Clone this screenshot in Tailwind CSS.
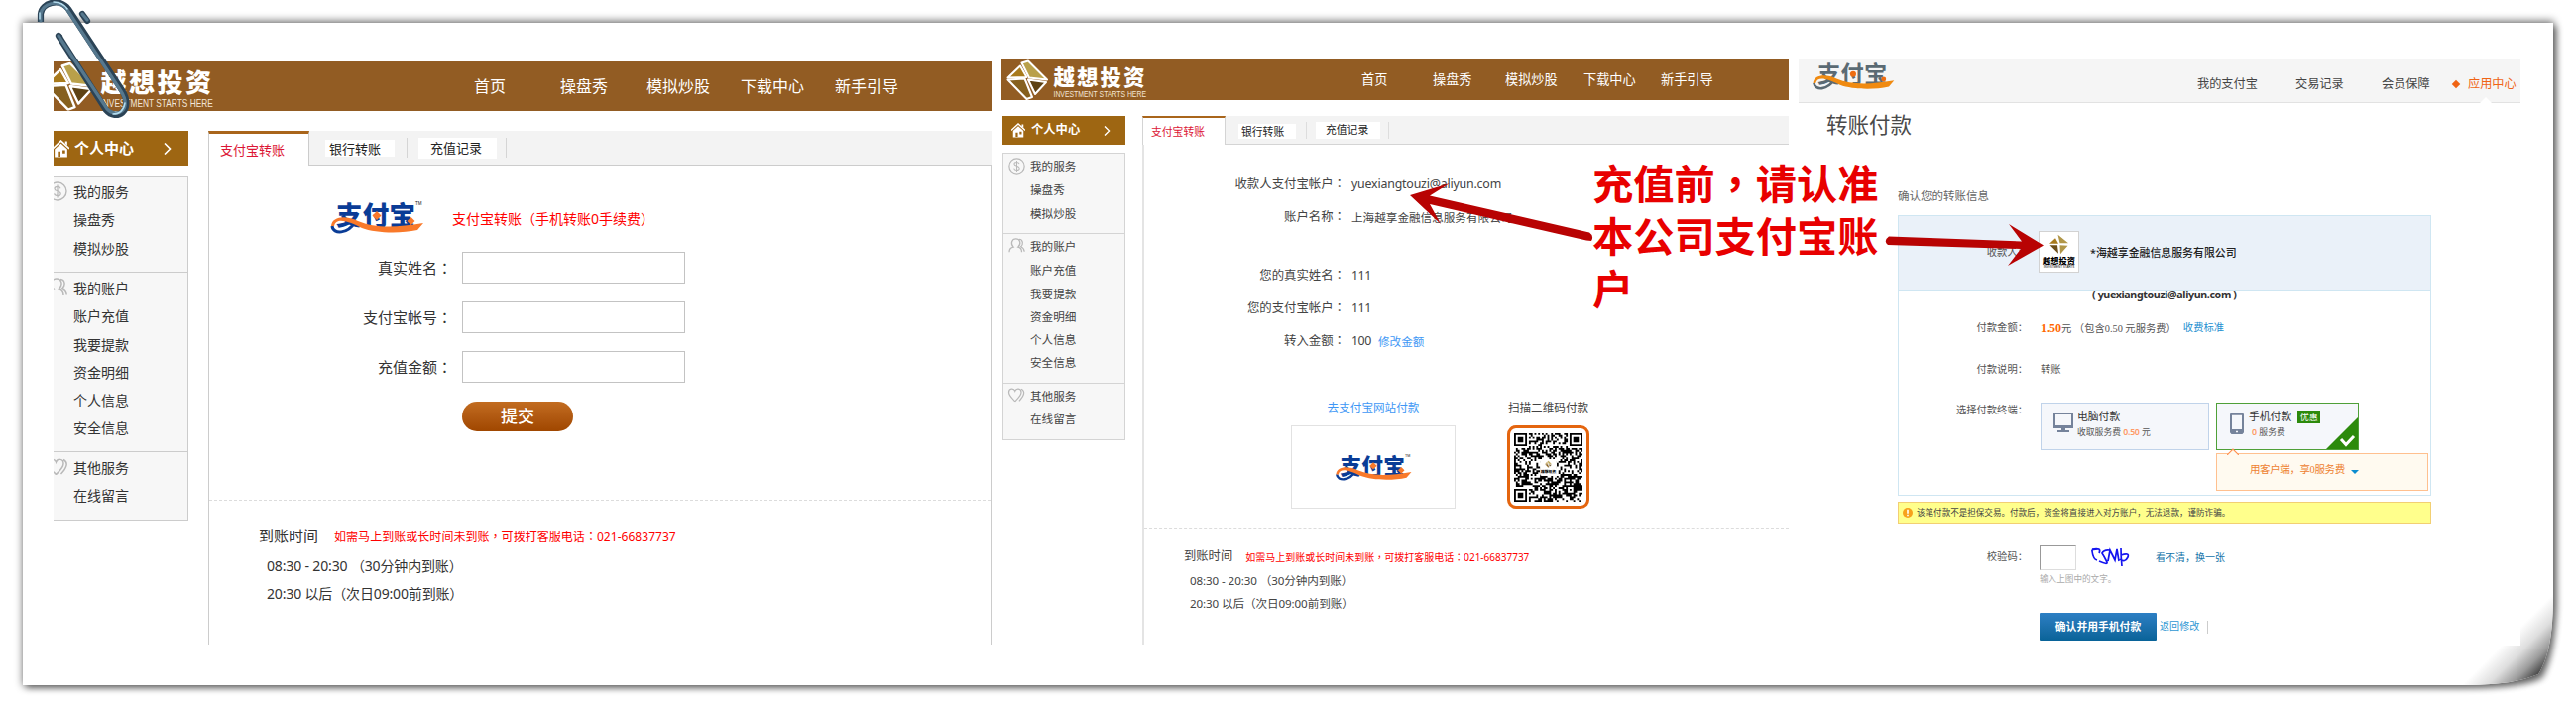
<!DOCTYPE html>
<html lang="zh-CN">
<head>
<meta charset="utf-8">
<title>支付宝转账</title>
<script src="https://cdn.jsdelivr.net/npm/@tailwindcss/browser@4"></script>
</head>
<body class="bg-white">
<div class="relative w-[2598px] h-[714px] overflow-hidden bg-white font-['Noto_Sans','Noto_Sans_CJK_SC',sans-serif] text-[#333] whitespace-nowrap">

<!-- shared symbols -->
<svg class="absolute w-0 h-0">
  <defs>
    <symbol id="mark" viewBox="0 0 42 41">
      <g stroke="#fff" stroke-width="2" stroke-linejoin="round">
        <path d="M1.5 18.5 14 6.500 20.500 18z" fill="#a87a1c"/>
        <path d="M1.500 20.500 18.500 19.500 26 38 20.500 40z" fill="#86601f"/>
        <path d="M15.500 3.500 22 1.500 41 20.500 23 18.500z" fill="#b9a04a"/>
        <path d="M22 20.500 40 23 29 35z" fill="#5e4214"/>
      </g>
    </symbol>
    <symbol id="brand" viewBox="0 0 142 41">
      <use href="#mark" width="42" height="41"/>
      <text x="47.500" y="25.500" font-size="21.500" font-weight="900" fill="#fff" textLength="92" lengthAdjust="spacing" font-family="Noto Sans CJK SC">越想投资</text>
      <text x="47.500" y="38.200" font-size="8.300" fill="#f3e6d8" textLength="93.500" lengthAdjust="spacingAndGlyphs" font-family="Liberation Sans">INVESTMENT STARTS HERE</text>
    </symbol>
    <symbol id="alipay" viewBox="0 0 94 33">
      <text x="6" y="24" font-size="26.500" font-weight="900" textLength="80" fill="currentColor" font-family="Noto Sans CJK SC">支付宝</text>
      <text x="86" y="4" font-size="5" fill="#111" textLength="6.500" lengthAdjust="spacingAndGlyphs" font-family="Liberation Sans">TM</text>
      <path d="M25 21C18 33 3 34 2 25" fill="none" stroke="currentColor" stroke-width="3"/>
      <path d="M1 25C2 15 16 14 28 20C45 27 65 27 94 22L88 29C70 33 45 32 32 27C18 20 6 16 4 25z" fill="#f9792a"/>
      <path d="M47 10 51.500 14.500 47 19 42.500 14.500zM81.500 16 85.500 20 81.500 24 77.500 20z" fill="#f9792a"/>
    </symbol>
    <symbol id="home" viewBox="0 0 16 17">
      <path d="M0 8.500 8 1 16 8.500" fill="none" stroke="#fff" stroke-width="1.600"/>
      <path d="M2 9 8 3.500 14 9V16.500H2zM5 11v5h2.500v-5zM9.500 10v3h2.500v-3z" fill="#fff" fill-rule="evenodd"/>
      <path d="M12 1.500h2v4l-2-2z" fill="#fff"/>
    </symbol>
    <symbol id="coin" viewBox="0 0 20 20">
      <circle cx="10" cy="10" r="9" fill="none" stroke="#b9b9b9" stroke-width="1.400"/>
      <path d="M13 7.200C12 4.600 7 4.800 7 7.400C7 10.200 13.200 9.400 13.200 12.500C13.200 15.400 7.500 15.400 6.600 12.400M10 3.600V16.400" fill="none" stroke="#b9b9b9" stroke-width="1.200"/>
    </symbol>
    <symbol id="people" viewBox="0 0 20 18">
      <path d="M1 17C1 13 3 11.500 6 11C2 7 4 1 9 1C14 1 16 7 11.500 11C14 11.500 16 13 16 17M13 1.500C18 2 18 8 15 10.500C18 12 19 13.500 19.200 16.500" fill="none" stroke="#b9b9b9" stroke-width="1.500"/>
    </symbol>
    <symbol id="heart" viewBox="0 0 20 18">
      <path d="M8.500 16.500C4 12 1 9.500 1 5.500C1 .5 7 0 8.500 4C10 0 16 .5 16 5.500C16 9.500 13 12 8.500 16.500M16 1.500C21 4 20 9 13.500 16" fill="none" stroke="#b9b9b9" stroke-width="1.500"/>
    </symbol>
  </defs>
</svg>

<!-- paper sheet with curled corner -->
<svg class="absolute left-0 top-0" width="2598" height="714">
  <defs>
    <linearGradient id="curl" gradientUnits="userSpaceOnUse" x1="2522" y1="652" x2="2554" y2="684">
      <stop offset="0" stop-color="#fff"/><stop offset=".4" stop-color="#dedede"/><stop offset=".75" stop-color="#9c9c9c"/><stop offset="1" stop-color="#505050"/>
    </linearGradient>
    <filter id="soft" x="-2%" y="-5%" width="104%" height="110%"><feGaussianBlur stdDeviation="4.500"/></filter>
    <filter id="tight" x="-2%" y="-5%" width="104%" height="110%"><feGaussianBlur stdDeviation="3"/></filter>
  </defs>
  <path d="M23 21H2576V610Q2574 660 2562 682Q2540 692 2480 692H23z" fill="#000" opacity=".55" filter="url(#soft)"/>
  <path d="M27 27H2579V612Q2577 662 2564 684Q2545 694 2490 694H27z" fill="#000" opacity=".35" filter="url(#tight)"/>
  <path d="M23 23H2575V600C2575 640 2570 664 2560 680C2540 688 2520 691 2480 691H23z" fill="#fff"/>
  <path d="M2575 540V600C2575 640 2570 664 2560 680C2540 688 2520 691 2480 691H2440V540z" fill="url(#curl)"/>
  <path d="M2400 500H2542V651H2400z" fill="#fff"/>
</svg>

<main class="relative flex items-start gap-[10px] pl-[54px] pt-[60px]">

  <!-- first capture: deposit form -->
  <section class="w-[946px] h-[588px] mt-[2px] shrink-0">
    <header class="h-[50px] bg-[#925c23] flex items-center overflow-hidden">
      <svg class="w-[172px] h-[50px] -ml-[10px] shrink-0"><use href="#brand"/></svg>
      <nav class="flex ml-[262px] text-white pb-px">
        <span class="w-[87px] text-[16px]">首页</span><span class="w-[87px] text-[16px]">操盘秀</span><span class="w-[95px] text-[16px]">模拟炒股</span><span class="w-[95px] text-[16px]">下载中心</span><span class="text-[16px]">新手引导</span>
      </nav>
    </header>
    <div class="flex mt-[20px] items-start">
      <aside class="w-[136px] mr-[20px]">
        <div class="h-[35px] bg-[#9e6612] flex items-center text-white font-bold text-[15px] overflow-hidden">
          <svg class="w-[17px] h-[18px] -ml-px mr-[5px] shrink-0"><use href="#home"/></svg>个人中心
          <svg class="w-[8px] h-[12px] ml-[30px]" viewBox="0 0 8 12"><path d="M1 .5 6.500 6 1 11.500" fill="none" stroke="#fff" stroke-width="1.600"/></svg>
        </div>
        <div class="mt-[10px] bg-[#f7f7f7] border-r border-b border-[#ccc] text-[14px] overflow-hidden">
          <div class="border-t border-[#ccc] pt-px pb-[10px]">
            <div class="h-[28px] flex items-center"><svg class="w-[20px] h-[20px] -ml-[6px] mr-[6px]"><use href="#coin"/></svg>我的服务</div>
            <div class="h-[29px] flex items-center pl-[20px]">操盘秀</div>
            <div class="h-[28px] flex items-center pl-[20px]">模拟炒股</div>
          </div>
          <div class="border-t border-[#ccc] pt-px pb-[10px]">
            <div class="h-[28px] flex items-center"><svg class="w-[20px] h-[18px] -ml-[6px] mr-[6px] -mt-[3px]"><use href="#people"/></svg>我的账户</div>
            <div class="h-[29px] flex items-center pl-[20px]">账户充值</div>
            <div class="h-[28px] flex items-center pl-[20px]">我要提款</div>
            <div class="h-[28px] flex items-center pl-[20px]">资金明细</div>
            <div class="h-[28px] flex items-center pl-[20px]">个人信息</div>
            <div class="h-[28px] flex items-center pl-[20px]">安全信息</div>
          </div>
          <div class="border-t border-[#ccc] pt-px pb-[10px]">
            <div class="h-[28px] flex items-center"><svg class="w-[20px] h-[18px] -ml-[6px] mr-[6px] -mt-px"><use href="#heart"/></svg>其他服务</div>
            <div class="h-[29px] flex items-center pl-[20px]">在线留言</div>
          </div>
        </div>
      </aside>
      <div class="w-[790px]">
        <div class="flex h-[35px] bg-[#f3f3f3] text-[13px]">
          <div class="w-[102px] bg-white border-t-[3px] border-t-[#a9651b] border-x border-x-[#ccc] pl-[11px] pt-px flex items-center text-[#dc1635]">支付宝转账</div>
          <div class="flex-1 border-b border-[#ccc] flex items-center text-[#222]">
            <span class="ml-[16px] w-[70px] h-[17px] mt-[1px] bg-white flex items-center pl-[4px]"><span class="mt-[3px]">银行转账</span></span>
            <span class="ml-[12px] w-px h-[20px] bg-[#d5d5d5]"></span>
            <span class="ml-[11px] w-[79px] h-[21px] bg-white flex items-center pl-[12px]"><span class="mt-[2px]">充值记录</span></span>
            <span class="ml-[9px] w-px h-[20px] bg-[#d5d5d5]"></span>
          </div>
        </div>
        <div class="h-[483px] border-l border-r border-[#ccc]">
          <div class="h-[338px] border-b border-dashed border-[#dcdcdc]">
            <div class="flex pt-[36px] pl-[122px] h-[87px]">
              <svg class="w-[94px] h-[33px] text-[#0a3c96]"><use href="#alipay"/></svg>
              <span class="ml-[29px] mt-[7px] text-[14px] text-[#f00]">支付宝转账（手机转账0手续费）</span>
            </div>
            <div class="flex flex-col gap-[18px] text-[15px]">
              <div class="flex items-center h-[32px]"><span class="w-[245px] text-right">真实姓名<span lang="zh-TW" class="font-['Noto_Sans_CJK_TC'] leading-none">：</span></span><span class="ml-[10px] w-[225px] h-[32px] border border-[#c3c3c3]"></span></div>
              <div class="flex items-center h-[32px]"><span class="w-[245px] text-right">支付宝帐号<span lang="zh-TW" class="font-['Noto_Sans_CJK_TC'] leading-none">：</span></span><span class="ml-[10px] w-[225px] h-[32px] border border-[#c3c3c3]"></span></div>
              <div class="flex items-center h-[32px]"><span class="w-[245px] text-right">充值金额<span lang="zh-TW" class="font-['Noto_Sans_CJK_TC'] leading-none">：</span></span><span class="ml-[10px] w-[225px] h-[32px] border border-[#c3c3c3]"></span></div>
            </div>
            <div class="mt-[19px] ml-[255px] w-[112px] h-[30px] rounded-full bg-linear-to-b from-[#c26c20] to-[#a04700] flex items-center justify-center text-white text-[17px] font-medium">提交</div>
          </div>
          <div class="pt-[20px] pl-[50px] text-[14px]">
            <div class="flex items-center h-[30px]"><span class="text-[15px]">到账时间</span><span class="ml-[16px] mt-[3px] text-[12px] text-[#f00] tracking-[0.040px]">如需马上到账或长时间未到账<span lang="zh-TW" class="font-['Noto_Sans_CJK_TC'] leading-none">，</span>可拨打客服电话<span lang="zh-TW" class="font-['Noto_Sans_CJK_TC'] leading-none">：</span>021-66837737</span></div>
            <div class="pl-[8px] h-[28px] flex items-center mt-px tracking-[-0.150px]">08:30 - 20:30 （30分钟内到账）</div>
            <div class="pl-[8px] h-[28px] flex items-center tracking-[-0.150px]">20:30 以后（次日09:00前到账）</div>
          </div>
        </div>
      </div>
    </div>
  </section>

  <!-- second capture: transfer details -->
  <section class="w-[794px] h-[590px] shrink-0">
    <header class="h-[41px] bg-[#925c23] flex items-center overflow-hidden">
      <svg class="w-[142px] h-[41px] ml-[5px] shrink-0"><use href="#brand"/></svg>
      <nav class="flex ml-[216px] text-[13.200px] text-white">
        <span class="w-[72px]">首页</span><span class="w-[73px]">操盘秀</span><span class="w-[79px]">模拟炒股</span><span class="w-[78px]">下载中心</span><span>新手引导</span>
      </nav>
    </header>
    <div class="flex mt-[16px] items-start pl-px">
      <aside class="w-[124px] mr-[17px]">
        <div class="h-[29px] bg-[#9e6612] flex items-center text-white font-bold text-[12.300px]">
          <svg class="w-[14px] h-[15px] ml-[9px] mr-[6px]"><use href="#home"/></svg>个人中心
          <svg class="w-[7px] h-[10px] ml-[24px]" viewBox="0 0 8 12"><path d="M1 .5 6.500 6 1 11.500" fill="none" stroke="#fff" stroke-width="1.600"/></svg>
        </div>
        <div class="mt-[8px] bg-[#f7f7f7] border-x border-b border-[#d4d4d4] text-[11.600px] text-[#444]">
          <div class="border-t border-[#d4d4d4] pt-px pb-[7.800px]">
            <div class="h-[23.400px] flex items-center"><svg class="w-[17px] h-[17px] ml-[5px] mr-[5px]"><use href="#coin"/></svg>我的服务</div>
            <div class="h-[24.600px] flex items-center pl-[27px]">操盘秀</div>
            <div class="h-[23.200px] flex items-center pl-[27px]">模拟炒股</div>
          </div>
          <div class="border-t border-[#d4d4d4] pt-px pb-[7.800px]">
            <div class="h-[23.400px] flex items-center"><svg class="w-[17px] h-[15px] ml-[5px] mr-[5px] -mt-[2px]"><use href="#people"/></svg>我的账户</div>
            <div class="h-[24.600px] flex items-center pl-[27px]">账户充值</div>
            <div class="h-[23.200px] flex items-center pl-[27px]">我要提款</div>
            <div class="h-[23.200px] flex items-center pl-[27px]">资金明细</div>
            <div class="h-[23.200px] flex items-center pl-[27px]">个人信息</div>
            <div class="h-[23.200px] flex items-center pl-[27px]">安全信息</div>
          </div>
          <div class="border-t border-[#d4d4d4] pt-px pb-[7.800px]">
            <div class="h-[23.400px] flex items-center"><svg class="w-[18px] h-[15px] ml-[4px] mr-[5px] -mt-[2px]"><use href="#heart"/></svg>其他服务</div>
            <div class="h-[24.600px] flex items-center pl-[27px]">在线留言</div>
          </div>
        </div>
      </aside>
      <div class="w-[652px]">
        <div class="flex h-[29px] bg-[#f3f3f3] text-[10.800px]">
          <div class="w-[84px] bg-white border-t-2 border-t-[#a9651b] border-x border-x-[#d4d4d4] pl-[8px] pt-[2px] flex items-center text-[#dc1635]">支付宝转账</div>
          <div class="flex-1 border-b border-[#d4d4d4] flex items-center text-[#222]">
            <span class="ml-[13px] w-[58px] h-[15px] mt-[2px] bg-white flex items-center pl-[3px]"><span class="mt-[2px]">银行转账</span></span>
            <span class="ml-[10px] w-px h-[17px] bg-[#ddd]"></span>
            <span class="ml-[9px] w-[65px] h-[17px] bg-white flex items-center pl-[10px]">充值记录</span>
            <span class="ml-[8px] w-px h-[17px] bg-[#ddd]"></span>
          </div>
        </div>
        <div class="h-[504px] border-l-2 border-[#e4e4e4]">
          <div class="h-[387px] pt-[24px] border-b border-dashed border-[#dcdcdc] text-[12.400px] text-[#444]">
            <div class="flex items-center h-[33px]"><span class="w-[203px] text-right">收款人支付宝帐户<span lang="zh-TW" class="font-['Noto_Sans_CJK_TC'] leading-none">：</span></span><span class="ml-[6px] tracking-[-0.200px]">yuexiangtouzi@aliyun.com</span></div>
            <div class="flex items-center h-[33px]"><span class="w-[203px] text-right">账户名称<span lang="zh-TW" class="font-['Noto_Sans_CJK_TC'] leading-none">：</span></span><span class="ml-[6px] text-[11.600px]">上海越享金融信息服务有限公司</span></div>
            <div class="flex items-center h-[33px] mt-[26px]"><span class="w-[203px] text-right">您的真实姓名<span lang="zh-TW" class="font-['Noto_Sans_CJK_TC'] leading-none">：</span></span><span class="ml-[6px] tracking-[-0.500px]">111</span></div>
            <div class="flex items-center h-[33px]"><span class="w-[203px] text-right">您的支付宝帐户<span lang="zh-TW" class="font-['Noto_Sans_CJK_TC'] leading-none">：</span></span><span class="ml-[6px] tracking-[-0.500px]">111</span></div>
            <div class="flex items-center h-[33px]"><span class="w-[203px] text-right">转入金额<span lang="zh-TW" class="font-['Noto_Sans_CJK_TC'] leading-none">：</span></span><span class="ml-[6px] w-[27px] tracking-[-0.500px]">100</span><span class="text-[11.600px] text-[#3e97f5]">修改金额</span></div>
            <div class="flex pl-[148px] mt-[40px] text-[11.600px]">
              <div class="w-[166px] mr-[52px] flex flex-col items-center">
                <span class="h-[20px] leading-[20px] text-[#3e97f5]">去支付宝网站付款</span>
                <div class="mt-[8px] w-[166px] h-[84px] border border-[#e2e2e2] flex items-center justify-center text-[#0a3c96]"><svg class="w-[78px] h-[27px]"><use href="#alipay"/></svg></div>
              </div>
              <div class="w-[83px] flex flex-col items-center">
                <span class="h-[20px] leading-[20px]">扫描二维码付款</span>
                <div class="mt-[8px] w-[83px] h-[84px] border-[3px] border-[#e4650f] rounded-[9px] flex items-center justify-center">
                  <svg class="w-[69px] h-[69px]" viewBox="0 0 37 37"><path id="qr" fill="#000"/><rect x="14" y="14" width="9" height="9" rx="1" fill="#fff"/><use href="#mark" x="16.500" y="14.500" width="4" height="4.500"/><text x="14.500" y="21.500" font-size="2" font-weight="900" font-family="Noto Sans CJK SC">越想投资</text></svg>
                </div>
              </div>
            </div>
          </div>
          <div class="pt-[15px] pl-[40px] text-[11.600px] text-[#444]">
            <div class="flex items-center h-[26px]"><span class="text-[12.300px]">到账时间</span><span class="ml-[13px] mt-[2px] text-[10px] text-[#f00]">如需马上到账或长时间未到账<span lang="zh-TW" class="font-['Noto_Sans_CJK_TC'] leading-none">，</span>可拨打客服电话<span lang="zh-TW" class="font-['Noto_Sans_CJK_TC'] leading-none">：</span>021-66837737</span></div>
            <div class="pl-[6px] h-[23px] flex items-center tracking-[-0.100px]">08:30 - 20:30 （30分钟内到账）</div>
            <div class="pl-[6px] h-[23px] flex items-center tracking-[-0.100px]">20:30 以后（次日09:00前到账）</div>
          </div>
        </div>
      </div>
    </div>
  </section>

  <!-- third capture: payment confirmation -->
  <section class="w-[728px] h-[590px] shrink-0 text-[10.300px] text-[#555]">
    <header class="h-[44px] bg-[#f5f5f5] border-b border-[#e2e2e2] flex text-[12.200px] text-[#444] relative">
      <svg class="w-[84px] h-[29px] ml-[13px] mt-[2px] text-[#5b6a73]" viewBox="0 0 94 33">
        <text x="6" y="24" font-size="26.500" font-weight="700" textLength="80" fill="currentColor" font-family="Noto Sans CJK SC">支付宝</text>
        <path d="M25 21C18 33 3 34 2 25" fill="none" stroke="currentColor" stroke-width="3"/>
        <path d="M1 25C2 15 16 14 28 20C45 27 65 27 94 22L88 29C70 33 45 32 32 27C18 20 6 16 4 25z" fill="#f08a10"/>
        <circle cx="47" cy="14.500" r="3.400" fill="#ee6c10"/><circle cx="82" cy="20.500" r="2.800" fill="#ee6c10"/>
      </svg>
      <nav class="flex items-center ml-[305px] h-[50px]">
        <span class="w-[99px]">我的支付宝</span><span class="w-[87px]">交易记录</span><span class="w-[72px]">会员保障</span>
        <span class="w-[6px] h-[6px] rotate-45 bg-[#f06414] mr-[9px]"></span><span class="text-[#f06414]">应用中心</span>
      </nav>
      <svg class="absolute left-[687px] top-[38px] w-[12px] h-[6px]" viewBox="0 0 12 6"><path d="M0 6 6 0 12 6z" fill="#fff"/></svg>
    </header>
    <h1 class="ml-[28px] mt-[7px] h-[30px] leading-[30px] text-[21.500px] text-[#4a4a4a]">转账付款</h1>
    <h2 class="ml-[100px] mt-[47px] h-[20px] leading-[20px] text-[11.500px] text-[#666]">确认您的转账信息</h2>
    <div class="ml-[100px] mt-[9px] w-[538px] h-[283px] border border-[#cfe6f2]">
      <div class="h-[75px] bg-[#eaf1f9] border-b border-[#cfe6f2] flex items-center">
        <span class="w-[130px] text-right">收款人：</span>
        <div class="ml-[11px] -mt-[2px] w-[41px] h-[42px] border border-[#d2d2d2] bg-white flex flex-col items-center pt-[2px]">
          <svg class="w-[21px] h-[21px]" viewBox="0 0 42 41"><path d="M2 19 14 8 20 19z" fill="#a87a1c"/><path d="M19 1 40 18 23 18zM23 22 39 23 24 40z" fill="#b09648"/><path d="M3 22 18 22 20 39z" fill="#6e4f1a"/></svg>
          <span class="mt-px h-[9px] leading-[9px] text-[8.200px] font-black font-['Noto_Sans_CJK_SC'] text-black">越想投资</span>
          <span class="h-[4px] leading-[4px] text-[3px] text-black font-['Liberation_Sans']">INVESTMENT STARTS</span>
        </div>
        <span class="ml-[11px] text-[10.900px] font-medium text-[#222]">*海越享金融信息服务有限公司</span>
      </div>
      <div class="-mt-[3px] pl-[195px] h-[14px] leading-[14px] text-[10.700px] font-bold text-[#333] tracking-[-0.380px]">( yuexiangtouzi@aliyun.com )</div>
      <div class="flex items-center h-[20px] mt-[17px]"><span class="w-[130px] text-right">付款金额：</span><span class="ml-[13px] font-['Liberation_Serif','Noto_Sans_CJK_SC',serif]"><b class="text-[12px] text-[#ff6600]">1.50</b>元 （包含0.50 元服务费）</span><span class="ml-[7px] text-[#1c8fd0]">收费标准</span></div>
      <div class="flex items-center h-[20px] mt-[22px]"><span class="w-[130px] text-right">付款说明：</span><span class="ml-[13px]">转账</span></div>
      <div class="flex items-start mt-[23px]">
        <span class="w-[130px] text-right h-[14px] leading-[14px]">选择付款终端：</span>
        <div class="ml-[13px] w-[170px] h-[48px] border border-[#c0d3ea] bg-[#f5f7fb] flex pl-[12px] pt-[6px]">
          <svg class="w-[20px] h-[22px] mt-[3px]" viewBox="0 0 20 22"><path d="M0 0H20V16H0zM2 2V13H18V2zM8 16h4v2h4v2H4v-2h4z" fill="#75839b" fill-rule="evenodd"/></svg>
          <div class="ml-[4px]"><div class="h-[15px] leading-[14px] text-[10.800px] text-[#333]">电脑付款</div><div class="h-[16px] leading-[16px] text-[8.800px]">收取服务费 <b class="text-[#ff9a66] font-semibold tracking-[-0.300px]">0.50</b> 元</div></div>
        </div>
        <div class="ml-[7px] w-[144px] h-[48px] border-[1.500px] border-[#4fa038] bg-[#f5f7fb] flex pl-[13px] pt-[5px] relative">
          <svg class="w-[14px] h-[22px] mt-[4px]" viewBox="0 0 14 20" preserveAspectRatio="none"><path d="M1.500 0h11L14 1.500v17L12.500 20h-11L0 18.500v-17zM2 2.500V15.500H12V2.500zM6 17v1.500h2V17z" fill="#75839b" fill-rule="evenodd"/></svg>
          <div class="ml-[5px]"><div class="flex items-center h-[16px] text-[10.800px] text-[#333]">手机付款<span class="ml-[6px] w-[23px] h-[13px] bg-[#2c8a0c] text-white text-[9px] leading-[13px] text-center">优惠</span></div><div class="h-[16px] leading-[16px] pl-[3px] text-[8.800px]"><b class="text-[#ff9a66] font-semibold">0</b> 服务费</div></div>
          <svg class="absolute right-0 bottom-0 w-[32px] h-[32px]" viewBox="0 0 32 32"><path d="M32 0V32H0z" fill="#2c8a0c"/><path d="M15 22 20 27.500 28 19" fill="none" stroke="#fff" stroke-width="3"/></svg>
        </div>
      </div>
      <div class="relative ml-[320px] mt-[3px] w-[214px] h-[38px] border-[1.500px] border-[#ffc08f] bg-[#fffaf0] flex items-center pl-[33px] pb-[5px] text-[10.500px] text-[#ee8130]">
        <svg class="absolute left-[10px] -top-[6px] w-[12px] h-[7px]" viewBox="0 0 12 7"><path d="M0 7 6 1 12 7" fill="#fffaf0" stroke="#ff9050" stroke-width="1.200"/></svg>
        <span class="font-['Liberation_Serif','Noto_Sans_CJK_SC',serif] tracking-[-0.400px]">用客户端，享0服务费</span>
        <svg class="ml-[6px] mt-[4px] w-[8px] h-[4px]" viewBox="0 0 8 4"><path d="M0 0H8L4 4z" fill="#0c8ccf"/></svg>
      </div>
    </div>
    <div class="ml-[100px] mt-[6px] w-[538px] h-[22px] bg-[#ffff8c] border border-[#f2cf73] flex items-center pl-[4px] text-[8.550px] text-[#444]">
      <svg class="w-[10px] h-[10px] mr-[4px]" viewBox="0 0 10 10"><circle cx="5" cy="5" r="5" fill="#f7a21b"/><path d="M4.200 1.800h1.600v4H4.200zM4.200 6.800h1.600v1.500H4.200z" fill="#fff"/></svg>该笔付款不是担保交易。付款后，资金将直接进入对方账户，无法退款，谨防诈骗。
    </div>
    <div class="flex items-center h-[22px] mt-[23px] pl-[100px]"><span class="w-[131px] text-right">校验码：</span><span class="ml-[12px] w-[37px] h-[25px] border border-[#ddd] border-t-[#999] border-l-[#999]"></span>
      <svg class="ml-[14px] w-[40px] h-[20px]" viewBox="0 0 40 20"><path d="M8 2Q1 2 2 4Q3 12 7 13M2 2Q12 0 9 6M9 14Q18 18 17 15Q14 9 12 6Q14 2 20 3M18 14 20 3 25 13 27 2 29 14M31 1Q31 10 32 19M31 8Q40 5 38 10Q35 16 30 12" fill="none" stroke="#1414f0" stroke-width="1.700"/></svg>
      <span class="ml-[26px] text-[10px] text-[#1272a8]">看不清，换一张</span></div>
    <div class="ml-[243px] mt-[4px] h-[14px] leading-[14px] text-[8.600px] text-[#aaa]">输入上图中的文字。</div>
    <div class="flex items-center ml-[243px] mt-[27px] h-[28px]">
      <div class="w-[118px] h-[28px] rounded-[1px] bg-linear-to-b from-[#2c7fc4] to-[#086398] text-white font-bold text-[10.800px] flex items-center justify-center">确认并用手机付款</div>
      <span class="ml-[3px] text-[10.100px] text-[#2f97d3]">返回修改</span><span class="ml-[8px] w-px h-[13px] bg-[#ccc]"></span>
    </div>
  </section>
</main>

<!-- annotation arrows and note -->
<svg class="absolute left-0 top-0" width="2598" height="714">
  <g fill="#b80303">
    <path d="M1422 197 1462 185 1442 197.500 1603 234.500Q1608 238 1605 243L1600 242.500 1442 206 1453 226z"/>
    <path d="M2061 247.500 2026 226 2039 243.500 1905 238.500Q1899 243 1904 247L2038 251 2025 268z"/>
  </g>
</svg>
<div class="absolute left-[1606px] top-[159px] text-[41.200px] leading-[53px] font-bold text-[#e80000]">充值前<span lang="zh-TW" class="font-['Noto_Sans_CJK_TC'] leading-none">，</span>请认准<br>本公司支付宝账<br>户</div>

<!-- paper clip -->
<svg class="absolute left-0 top-0" width="150" height="130" fill="none" stroke-linecap="round" stroke-linejoin="round">
  <g stroke="#2b4356" stroke-width="6.200">
    <path d="M41 22V14C42 3 60-3 69 9L123 91C136 112 117 123 107 111L59 36" stroke-linecap="butt"/>
    <path d="M83 14 88 21"/><path d="M60 37 59 36"/>
  </g>
  <g stroke="#56788e" stroke-width="3.200">
    <path d="M41 21V14C42 4 59-2 68 10L122 92C134 111 118 120 108 110L59 36"/>
    <path d="M83 14 88 20"/>
  </g>
  <path d="M54 2Q63 2 68 9M126 104Q124 115 114 115M40 19V13" stroke="#b4dcee" stroke-width="1.500"/>
</svg>
</div>

<script>
// Fill the QR code: finder squares, alignment square and data modules on a 37x37 grid
(function () {
  var n = 37, s = 20117, d = '';
  function rnd() { s = (s * 1103515245 + 12345) % 2147483648; return (s >> 8 & 1023) / 1023; }
  function ring(x, y, cx, cy, r) {
    var m = Math.max(Math.abs(x - cx), Math.abs(y - cy));
    return m > r ? -1 : m;
  }
  for (var y = 0; y < n; y++) for (var x = 0; x < n; x++) {
    var on = rnd() < 0.52, k = Math.max(ring(x, y, 3, 3, 4), ring(x, y, n - 4, 3, 4), ring(x, y, 3, n - 4, 4));
    if (k >= 0) on = k < 2 || k === 3;
    var a = ring(x, y, n - 7, n - 7, 2);
    if (a >= 0) on = a !== 1;
    if (on) d += 'M' + x + ' ' + y + 'h1v1h-1z';
  }
  document.getElementById('qr').setAttribute('d', d);
})();
</script>
</body>
</html>
